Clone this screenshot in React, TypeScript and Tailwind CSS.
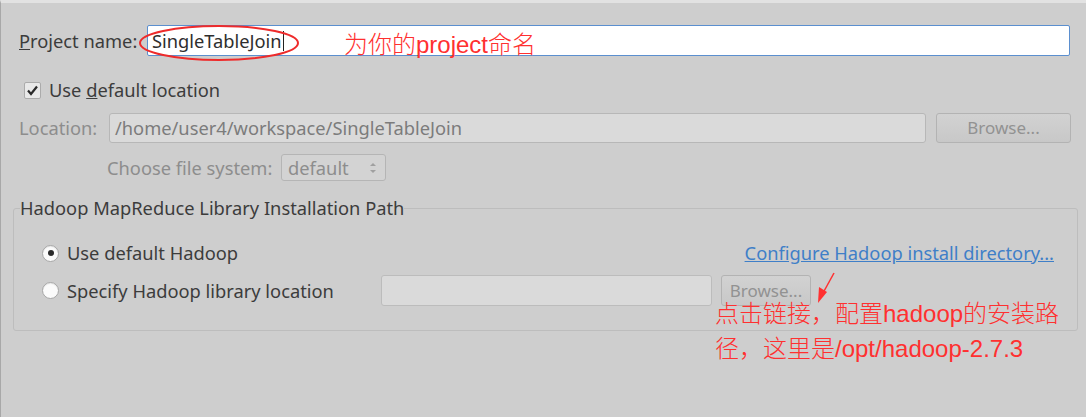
import React from "react";

const ui = { fontFamily: '"Noto Sans", "DejaVu Sans", sans-serif' };
const note = { fontFamily: '"Liberation Sans", "Noto Sans CJK SC", sans-serif' };
const cjk = { fontFamily: '"Noto Sans CJK SC", sans-serif', fontWeight: 300 };

function Radio({ checked }: { checked?: boolean }) {
  return (
    <span className="flex h-[17px] w-[17px] shrink-0 items-center justify-center rounded-full border border-[#a6a6a6] bg-[#fbfbfb] shadow-[inset_0_1px_1px_rgba(0,0,0,0.08)]">
      {checked && <span className="h-[6px] w-[6px] rounded-full bg-[#2a2a2a]" />}
    </span>
  );
}

function Browse({ className = "" }: { className?: string }) {
  return (
    <div
      className={
        "flex shrink-0 items-center justify-center rounded-[3px] border border-[#b3b3b3] bg-gradient-to-b from-[#d2d2d2] to-[#c8c8c8] text-[17px] text-[#929292] " +
        className
      }
    >
      Browse...
    </div>
  );
}

export default function App() {
  return (
    <div
      className="relative h-[417px] w-[1086px] overflow-hidden border-l border-t-[3px] border-l-[#a8a8a8] border-t-[#e2e2e2] bg-[#cecece] text-[18.3px] leading-[20px] text-[#3c3c3c]"
      style={ui}
    >
      {/* Project name */}
      <div className="mt-[22px] flex items-center pl-[18px] pr-[16px]">
        <div className="w-[128px]">
          <span className="underline">P</span>roject name:
        </div>
        <div className="flex h-[31px] flex-1 items-center rounded-[2px] border border-[#5b8fcf] bg-white pl-[4px] text-[#2e2e2e]">
          SingleTableJoin
          <span className="ml-[1px] h-[20px] w-[1px] bg-[#222]" />
        </div>
      </div>

      {/* Use default location */}
      <div className="mt-[24px] flex h-[20px] items-center pl-[23px]">
        <span className="flex h-[17px] w-[17px] items-center justify-center rounded-[2px] border border-[#ababab] bg-[#e9e9e9]">
          <svg width="13" height="13" viewBox="0 0 13 13">
            <path d="M2 6.5 L5 10 L11 2.5" fill="none" stroke="#2a2a2a" strokeWidth="2.2" />
          </svg>
        </span>
        <span className="ml-[8px]">
          Use <span className="underline">d</span>efault location
        </span>
      </div>

      {/* Location */}
      <div className="mt-[13px] flex items-center pl-[18px] pr-[15px] text-[#8d8d8d]">
        <div className="w-[90px]">Location:</div>
        <div className="flex h-[30px] flex-1 items-center rounded-[3px] border border-[#b7b7b7] bg-[#dadada] pl-[5px] text-[#7c7c7c]">
          /home/user4/workspace/SingleTableJoin
        </div>
        <Browse className="ml-[10px] h-[30px] w-[135px]" />
      </div>

      {/* Choose file system */}
      <div className="mt-[11px] flex items-center pl-[106px] text-[#8d8d8d]">
        <div className="w-[174px]">Choose file system:</div>
        <div className="flex h-[27px] w-[105px] items-center justify-between rounded-[3px] border border-[#b5b5b5] bg-[#d3d3d3] pl-[6px] pr-[8px]">
          <span>default</span>
          <svg width="8" height="14" viewBox="0 0 8 14">
            <path d="M1 5 L4 2 L7 5 Z" fill="#a0a0a0" />
            <path d="M1 9 L4 12 L7 9 Z" fill="#a0a0a0" />
          </svg>
        </div>
      </div>

      {/* Group */}
      <fieldset className="ml-[12px] mr-[8px] mt-[17px] h-[133px] rounded-[3px] border border-[#bdbdbd] px-0 pb-0 pt-0">
        <legend className="ml-[6px] px-0 leading-[20px] text-[#3c3c3c]">
          Hadoop MapReduce Library Installation Path
        </legend>
        <div className="mt-[25px] flex h-[20px] items-center pl-[28px] pr-[23px]">
          <Radio checked />
          <span className="ml-[8px] flex-1">Use default Hadoop</span>
          <span className="text-[#3f7fc8] underline decoration-[#3f7fc8]">
            Configure Hadoop install directory...
          </span>
        </div>
        <div className="mt-[12px] flex items-center pl-[28px]">
          <Radio />
          <span className="ml-[8px] w-[314px]">Specify Hadoop library location</span>
          <div className="h-[31px] w-[331px] rounded-[3px] border border-[#bcbcbc] bg-[#dadada]" />
          <Browse className="ml-[9px] h-[31px] w-[90px]" />
        </div>
      </fieldset>

      {/* Annotations */}
      <svg className="pointer-events-none absolute left-0 top-0" width="1086" height="417">
        <ellipse cx="218" cy="40" rx="79" ry="17" fill="none" stroke="#ee2b2b" strokeWidth="2" />
        <line x1="833" y1="270" x2="822" y2="290" stroke="#ff3030" strokeWidth="1.5" />
        <path d="M817 300 L818 284 L826 289 Z" fill="#ff3030" />
      </svg>
      <div
        className="absolute left-[343px] top-[25px] text-[24px] font-normal leading-[30px] text-[#ff3030]"
        style={note}
      >
        <span style={cjk}>为你的</span>project<span style={cjk}>命名</span>
      </div>
      <div
        className="absolute left-[714px] top-[292px] text-[24px] font-normal leading-[33px] text-[#ff3030]"
        style={note}
      >
        <span style={cjk}>点击链接，配置</span>hadoop<span style={cjk}>的安装路</span>
        <br />
        <span style={cjk}>径，这里是</span>/opt/hadoop-2.7.3
      </div>
    </div>
  );
}
